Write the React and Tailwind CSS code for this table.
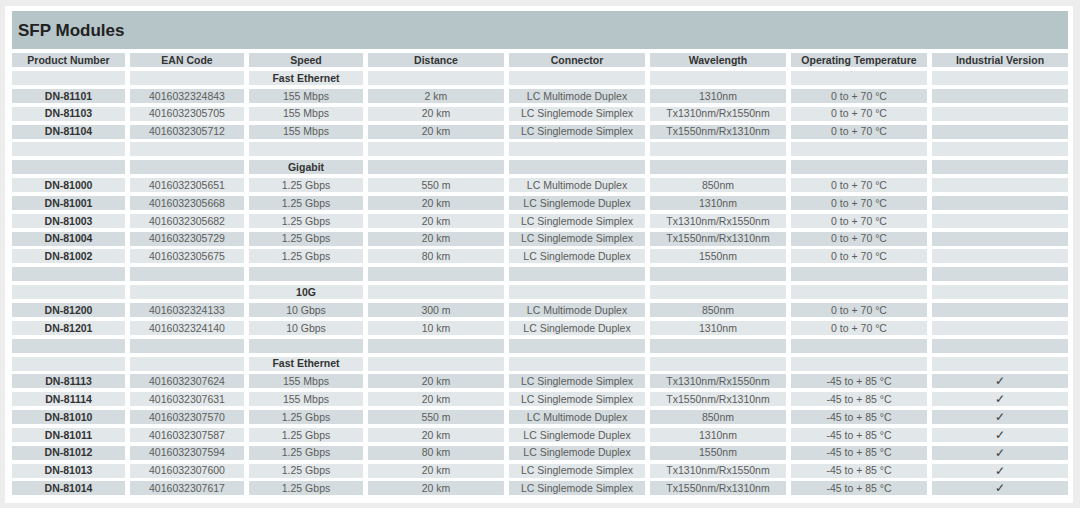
import React from "react";

const columns = [
  "Product Number",
  "EAN Code",
  "Speed",
  "Distance",
  "Connector",
  "Wavelength",
  "Operating Temperature",
  "Industrial Version",
];

const std = "0 to + 70 °C";
const ind = "-45 to + 85 °C";

// group rows have only a label in the speed column, blank rows have nothing
const rows = [
  { group: "Fast Ethernet" },
  ["DN-81101", "4016032324843", "155 Mbps", "2 km", "LC Multimode Duplex", "1310nm", std, ""],
  ["DN-81103", "4016032305705", "155 Mbps", "20 km", "LC Singlemode Simplex", "Tx1310nm/Rx1550nm", std, ""],
  ["DN-81104", "4016032305712", "155 Mbps", "20 km", "LC Singlemode Simplex", "Tx1550nm/Rx1310nm", std, ""],
  { blank: true },
  { group: "Gigabit" },
  ["DN-81000", "4016032305651", "1.25 Gbps", "550 m", "LC Multimode Duplex", "850nm", std, ""],
  ["DN-81001", "4016032305668", "1.25 Gbps", "20 km", "LC Singlemode Duplex", "1310nm", std, ""],
  ["DN-81003", "4016032305682", "1.25 Gbps", "20 km", "LC Singlemode Simplex", "Tx1310nm/Rx1550nm", std, ""],
  ["DN-81004", "4016032305729", "1.25 Gbps", "20 km", "LC Singlemode Simplex", "Tx1550nm/Rx1310nm", std, ""],
  ["DN-81002", "4016032305675", "1.25 Gbps", "80 km", "LC Singlemode Duplex", "1550nm", std, ""],
  { blank: true },
  { group: "10G" },
  ["DN-81200", "4016032324133", "10 Gbps", "300 m", "LC Multimode Duplex", "850nm", std, ""],
  ["DN-81201", "4016032324140", "10 Gbps", "10 km", "LC Singlemode Duplex", "1310nm", std, ""],
  { blank: true },
  { group: "Fast Ethernet" },
  ["DN-81113", "4016032307624", "155 Mbps", "20 km", "LC Singlemode Simplex", "Tx1310nm/Rx1550nm", ind, "✓"],
  ["DN-81114", "4016032307631", "155 Mbps", "20 km", "LC Singlemode Simplex", "Tx1550nm/Rx1310nm", ind, "✓"],
  ["DN-81010", "4016032307570", "1.25 Gbps", "550 m", "LC Multimode Duplex", "850nm", ind, "✓"],
  ["DN-81011", "4016032307587", "1.25 Gbps", "20 km", "LC Singlemode Duplex", "1310nm", ind, "✓"],
  ["DN-81012", "4016032307594", "1.25 Gbps", "80 km", "LC Singlemode Duplex", "1550nm", ind, "✓"],
  ["DN-81013", "4016032307600", "1.25 Gbps", "20 km", "LC Singlemode Simplex", "Tx1310nm/Rx1550nm", ind, "✓"],
  ["DN-81014", "4016032307617", "1.25 Gbps", "20 km", "LC Singlemode Simplex", "Tx1550nm/Rx1310nm", ind, "✓"],
];

const toCells = (row) => {
  if (Array.isArray(row)) return row;
  if (row.group) return ["", "", row.group, "", "", "", "", ""];
  return ["", "", "", "", "", "", "", ""];
};

const App = () => {
  return (
    <div
      className="w-[1080px] h-[508px] bg-[#ededed] pl-[5px] pr-[7px] pt-[6px] pb-[5px] overflow-hidden"
      style={{ fontFamily: '"Liberation Sans", Arial, sans-serif' }}
    >
      <div className="bg-white h-full pl-[7px] pr-[5px] pt-[5px]">
        <div className="h-[38px] bg-[#b6c5c8] flex items-center pl-[6px]">
          <h1 className="text-[17px] font-bold text-[#222] leading-none">SFP Modules</h1>
        </div>

        <div className="mt-[4px] grid grid-cols-[113px_114px_114px_136px_136px_136px_136px_1fr] gap-x-[5px]">
          {columns.map((c) => (
            <div
              key={c}
              className="h-[14px] bg-[#d2dadd] flex items-center justify-center text-[10.5px] font-bold text-[#333] leading-none"
            >
              {c}
            </div>
          ))}
        </div>

        <div className="mt-[4px] grid grid-cols-[113px_114px_114px_136px_136px_136px_136px_1fr] gap-x-[5px] gap-y-[3.85px]">
          {rows.map((row, i) => {
            const cells = toCells(row);
            const bg = i % 2 === 0 ? "bg-[#e2e7e9]" : "bg-[#d4dcdf]";
            return cells.map((text, j) => {
              const bold = j === 0 || (row.group && j === 2);
              const check = j === 7 && text;
              return (
                <div
                  key={`${i}-${j}`}
                  className={`h-[14px] ${bg} flex items-center justify-center leading-none whitespace-nowrap ${
                    check
                      ? "text-[12px] text-[#3a3a3a]"
                      : bold
                      ? "text-[10.5px] font-bold text-[#333]"
                      : "text-[10.5px] text-[#5c5c5c]"
                  }`}
                >
                  {text}
                </div>
              );
            });
          })}
        </div>
      </div>
    </div>
  );
};

export default App;
